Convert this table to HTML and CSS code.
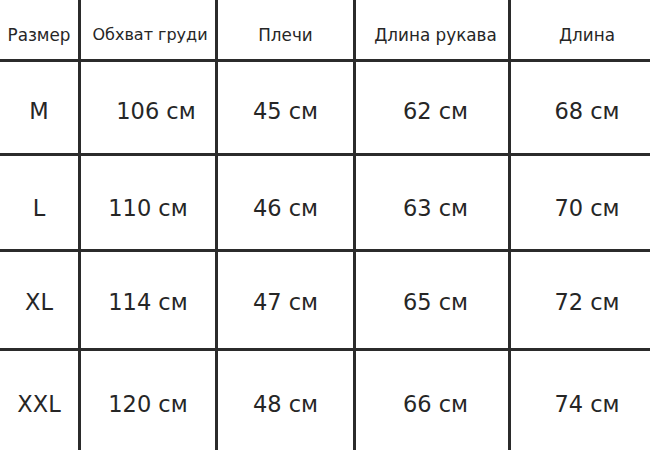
FILE: index.html
```html
<!DOCTYPE html>
<html lang="ru">
<head>
<meta charset="utf-8">
<title>Размерная таблица</title>
<link rel="stylesheet" href="styles.css">
</head>
<body>
<div class="chart">
  <div class="cell head c1">Размер</div>
  <div class="cell head c2">Обхват груди</div>
  <div class="cell head c3">Плечи</div>
  <div class="cell head c4">Длина рукава</div>
  <div class="cell head c5">Длина</div>

  <div class="cell r1 c1">M</div>
  <div class="cell r1 c2 shifted">106 см</div>
  <div class="cell r1 c3">45 см</div>
  <div class="cell r1 c4">62 см</div>
  <div class="cell r1 c5">68 см</div>

  <div class="cell r2 c1">L</div>
  <div class="cell r2 c2">110 см</div>
  <div class="cell r2 c3">46 см</div>
  <div class="cell r2 c4">63 см</div>
  <div class="cell r2 c5">70 см</div>

  <div class="cell r3 c1">XL</div>
  <div class="cell r3 c2">114 см</div>
  <div class="cell r3 c3">47 см</div>
  <div class="cell r3 c4">65 см</div>
  <div class="cell r3 c5">72 см</div>

  <div class="cell r4 c1">XXL</div>
  <div class="cell r4 c2">120 см</div>
  <div class="cell r4 c3">48 см</div>
  <div class="cell r4 c4">66 см</div>
  <div class="cell r4 c5">74 см</div>
</div>
</body>
</html>
```
FILE: styles.css
```css
html, body {
  margin: 0;
  padding: 0;
  background: #ffffff;
}

.chart {
  width: 650px;
  height: 450px;
  display: grid;
  grid-template-columns: 78px 134px 135px 152px 139px;
  grid-template-rows: 59px 91px 93px 96px 99px;
  gap: 3px;
  background: #2b2b2b;
  overflow: hidden;
}

.cell {
  background: #ffffff;
  display: flex;
  align-items: center;
  justify-content: center;
  box-sizing: border-box;
  font-family: "DejaVu Sans", sans-serif;
  font-size: 22.5px;
  color: #262626;
  white-space: nowrap;
  line-height: 1.2;
}

.head {
  font-size: 16.8px;
  padding-top: 11px;
}

.head.c2 {
  font-size: 16px;
  padding-left: 4px;
}

.r1 { padding-top: 8px; }
.r2 { padding-top: 11px; }
.r3 { padding-top: 5px; }
.r4 { padding-top: 8px; }

.c4 { padding-left: 7px; }
.c5 { padding-left: 13px; }

.shifted { padding-left: 16px; }
```
